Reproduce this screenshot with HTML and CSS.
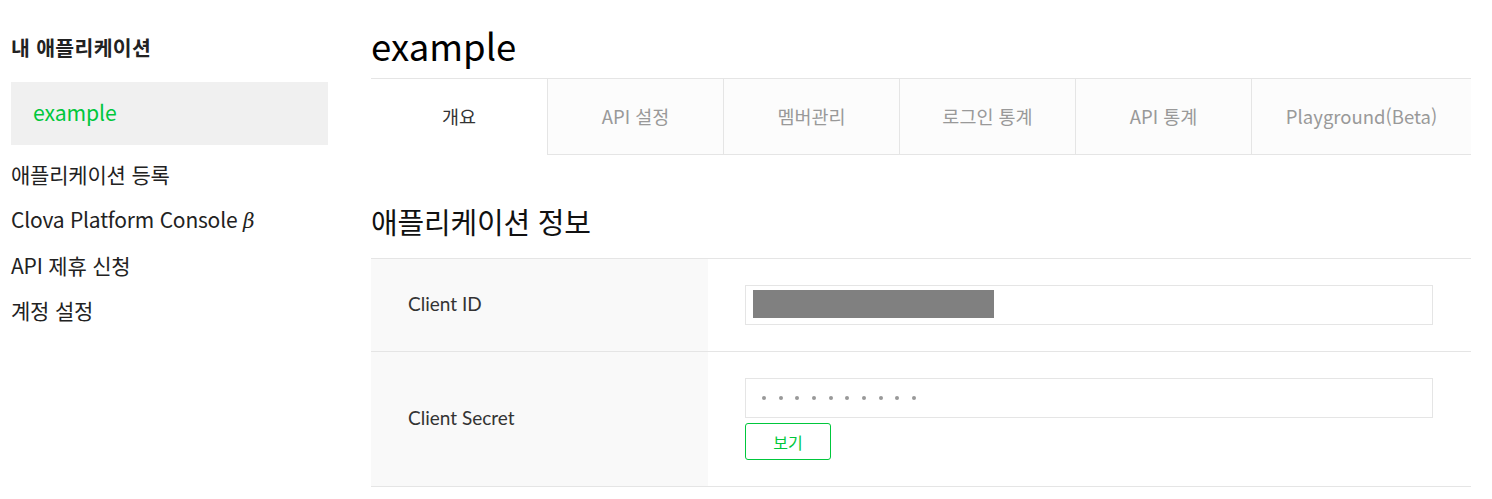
FILE: index.html
```html
<!DOCTYPE html>
<html lang="ko">

<head>
    <meta charset="utf-8">
    <title>내 애플리케이션 - example</title>
    <link rel="stylesheet" href="styles.css">
</head>

<body>
    <div class="page">
        <aside class="sidebar">
            <h2 class="sidebar-title">내 애플리케이션</h2>
            <div class="app-item">example</div>
            <ul class="menu">
                <li>애플리케이션 등록</li>
                <li>Clova Platform Console <i class="beta">β</i></li>
                <li>API 제휴 신청</li>
                <li>계정 설정</li>
            </ul>
        </aside>

        <main class="content">
            <h1 class="app-name">example</h1>

            <div class="tabs">
                <div class="tab active">개요</div>
                <div class="tab">API 설정</div>
                <div class="tab">멤버관리</div>
                <div class="tab">로그인 통계</div>
                <div class="tab">API 통계</div>
                <div class="tab last">Playground(Beta)</div>
            </div>

            <h2 class="section-title">애플리케이션 정보</h2>

            <div class="info-table">
                <div class="info-row">
                    <div class="info-label">Client ID</div>
                    <div class="info-value">
                        <div class="field">
                            <span class="masked"></span>
                        </div>
                    </div>
                </div>
                <div class="info-row">
                    <div class="info-label">Client Secret</div>
                    <div class="info-value">
                        <div class="field dots">
                            <span></span><span></span><span></span><span></span><span></span>
                            <span></span><span></span><span></span><span></span><span></span>
                        </div>
                        <button type="button" class="show-btn">보기</button>
                    </div>
                </div>
            </div>
        </main>
    </div>
</body>

</html>
```

FILE: styles.css
```css
body {
    margin: 0;
    font-family: 'Noto Sans CJK KR', 'Noto Sans', sans-serif;
    color: #222;
    background: #fff;
}

.page {
    display: flex;
}

/* sidebar */
.sidebar {
    width: 317px;
    padding: 32px 0 0 11px;
    flex-shrink: 0;
}

.sidebar-title {
    margin: 0 0 20px;
    font-size: 20.5px;
    line-height: 30px;
    font-weight: 700;
    letter-spacing: 0.3px;
}

.app-item {
    height: 63px;
    line-height: 59px;
    padding-left: 22px;
    background-color: #f0f0f0;
    color: #00c73c;
    font-size: 21.2px;
    letter-spacing: -0.1px;
}

.menu {
    list-style: none;
    margin: 7px 0 0;
    padding: 0;
}

.menu li {
    font-size: 21px;
    line-height: 45.4px;
    letter-spacing: -0.2px;
}

.beta {
    font-family: 'DejaVu Serif', serif;
    font-style: italic;
    font-size: 20px;
    line-height: 0;
}

/* main */
.content {
    width: 1100px;
    margin-left: 43px;
    padding-top: 21px;
}

.app-name {
    margin: 0 0 7px;
    font-size: 36.5px;
    line-height: 50px;
    font-weight: 400;
    color: #000;
}

.tabs {
    display: flex;
    border-top: 1px solid #e5e5e5;
}

.tab {
    width: 175px;
    height: 75px;
    line-height: 74px;
    text-align: center;
    font-size: 18.5px;
    color: #999;
    background-color: #fcfcfc;
    border-left: 1px solid #e5e5e5;
    border-bottom: 1px solid #e5e5e5;
}

.tab.active {
    border-left: none;
    width: 176px;
    background-color: #fff;
    border-bottom-color: #fff;
    color: #333;
}

.tab.last {
    flex: 1;
}

.section-title {
    margin: 46px 0 17px;
    font-size: 29px;
    line-height: 40px;
    font-weight: 400;
    color: #111;
    letter-spacing: -0.2px;
}

.info-table {
    border-bottom: 1px solid #e5e5e5;
}

.info-row {
    display: flex;
    border-top: 1px solid #e5e5e5;
}

.info-label {
    width: 300px;
    padding: 0 0 3px 37px;
    display: flex;
    align-items: center;
    background-color: #f9f9f9;
    font-family: Lato, 'Noto Sans CJK KR', sans-serif;
    font-size: 19px;
    color: #333;
}

.info-value {
    flex: 1;
    padding: 26px 38px 26px 37px;
}

.field {
    height: 40px;
    border: 1px solid #e5e5e5;
    padding: 4px 7px;
    box-sizing: border-box;
}

.masked {
    display: block;
    width: 241px;
    height: 28px;
    background-color: #808080;
}

.dots {
    display: flex;
    align-items: center;
    gap: 12.67px;
    padding-left: 16px;
}

.dots span {
    width: 4px;
    height: 4px;
    border-radius: 50%;
    background-color: #999;
}

.show-btn {
    display: block;
    margin-top: 5px;
    width: 86px;
    height: 37px;
    padding: 0;
    border: 1px solid #00c73c;
    border-radius: 3px;
    background: #fff;
    color: #00c73c;
    font-family: 'Noto Sans CJK KR', sans-serif;
    font-size: 16px;
    cursor: pointer;
}
```
